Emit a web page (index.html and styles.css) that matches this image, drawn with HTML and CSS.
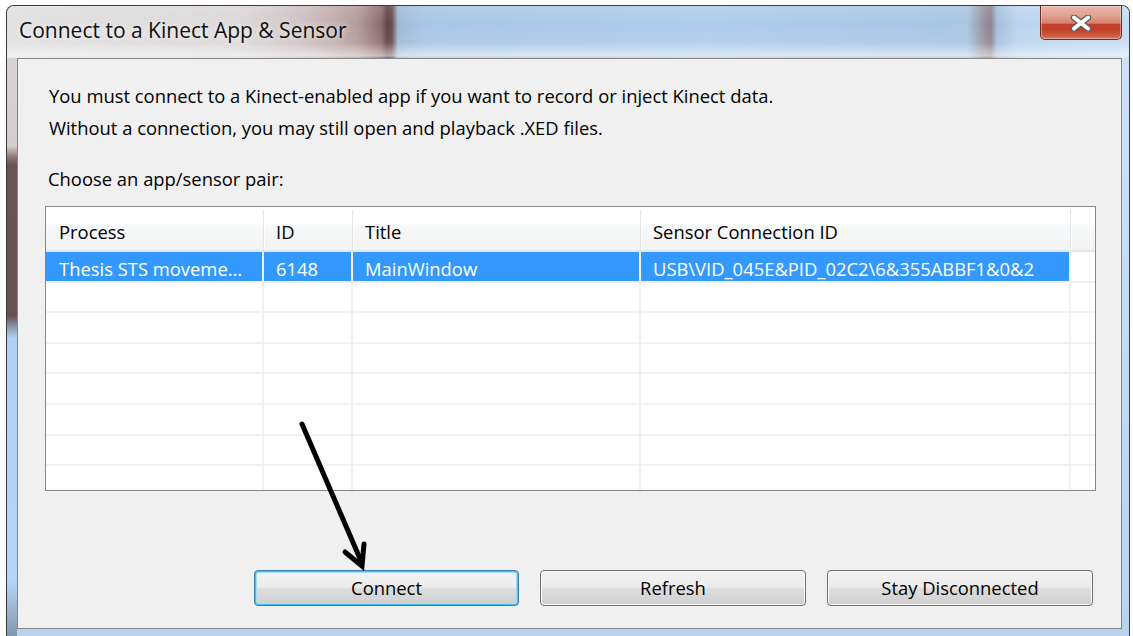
FILE: index.html
```html
<!DOCTYPE html>
<html lang="en">
<head>
<meta charset="utf-8">
<title>Connect to a Kinect App &amp; Sensor</title>
<link rel="stylesheet" href="styles.css">
</head>
<body>
<div class="window">
  <div class="titlebar">
    <span class="title">Connect to a Kinect App &amp; Sensor</span>
    <button class="close" aria-label="Close">
      <svg width="22" height="16" viewBox="0 0 22 16">
        <path d="M4 2.5 L18 13.5 M18 2.5 L4 13.5" stroke="#5a5a5a" stroke-width="6.4" stroke-linecap="round"/>
        <path d="M4 2.5 L18 13.5 M18 2.5 L4 13.5" stroke="#ffffff" stroke-width="4" stroke-linecap="round"/>
      </svg>
    </button>
  </div>
  <div class="client">
    <p class="msg">You must connect to a Kinect-enabled app if you want to record or inject Kinect data.<br>Without a connection, you may still open and playback .XED files.</p>
    <p class="label">Choose an app/sensor pair:</p>
    <div class="listview">
      <div class="row head">
        <div class="cell c1">Process</div>
        <div class="cell c2">ID</div>
        <div class="cell c3">Title</div>
        <div class="cell c4">Sensor Connection ID</div>
        <div class="cell c5"></div>
      </div>
      <div class="row selected">
        <div class="cell c1">Thesis STS moveme...</div>
        <div class="cell c2">6148</div>
        <div class="cell c3">MainWindow</div>
        <div class="cell c4">USB\VID_045E&amp;PID_02C2\6&amp;355ABBF1&amp;0&amp;2</div>
        <div class="cell c5"></div>
      </div>
      <div class="row"><div class="cell c1"></div><div class="cell c2"></div><div class="cell c3"></div><div class="cell c4"></div><div class="cell c5"></div></div>
      <div class="row"><div class="cell c1"></div><div class="cell c2"></div><div class="cell c3"></div><div class="cell c4"></div><div class="cell c5"></div></div>
      <div class="row"><div class="cell c1"></div><div class="cell c2"></div><div class="cell c3"></div><div class="cell c4"></div><div class="cell c5"></div></div>
      <div class="row"><div class="cell c1"></div><div class="cell c2"></div><div class="cell c3"></div><div class="cell c4"></div><div class="cell c5"></div></div>
      <div class="row"><div class="cell c1"></div><div class="cell c2"></div><div class="cell c3"></div><div class="cell c4"></div><div class="cell c5"></div></div>
      <div class="row"><div class="cell c1"></div><div class="cell c2"></div><div class="cell c3"></div><div class="cell c4"></div><div class="cell c5"></div></div>
      <div class="row"><div class="cell c1"></div><div class="cell c2"></div><div class="cell c3"></div><div class="cell c4"></div><div class="cell c5"></div></div>
    </div>
    <div class="actions">
      <button class="btn default">Connect</button>
      <button class="btn">Refresh</button>
      <button class="btn">Stay Disconnected</button>
    </div>
  </div>
</div>
<svg class="pointer" width="1133" height="636" viewBox="0 0 1133 636">
  <path d="M302 424 L361 561" stroke="#000" stroke-width="5" stroke-linecap="round" fill="none"/>
  <path d="M345 552 L362 566 L364 544" stroke="#000" stroke-width="5" stroke-linecap="round" stroke-linejoin="miter" fill="none"/>
</svg>
</body>
</html>
```

FILE: styles.css
```css
html, body {
  margin: 0;
  height: 100%;
}

body {
  background: #ffffff;
  font-family: "Open Sans", "Noto Sans", sans-serif;
  color: #000;
  overflow: hidden;
  position: relative;
}

/* Aero glass window frame */
.window {
  margin: 5px 0 0 6px;
  width: 1124px;
  height: 640px;
  box-sizing: border-box;
  border: 1px solid #3a3a3a;
  border-bottom: 0;
  border-radius: 8px 8px 0 0;
  padding: 0 7px 0 10px;
  overflow: hidden;
  display: flex;
  flex-direction: column;
  background:
    linear-gradient(to bottom,
      #dcd6d7 0, #d4cccd 140px, #8a6e70 152px, #6b5153 160px,
      #6a5052 310px, #8e9fb4 322px, #b1d1f1 332px,
      #b5d5f5 575px, #9bb4cc 605px, #8099b2 630px) 0 0 / 10px 100% no-repeat,
    linear-gradient(to bottom, #cfe3f7, #c3dbf3 50%, #b9d3ee);
}

.titlebar {
  flex: none;
  height: 52px;
  margin: 0 -7px 0 -10px;
  padding: 0 7px 0 12px;
  display: flex;
  justify-content: space-between;
  align-items: flex-start;
  background:
    linear-gradient(to bottom, rgba(255,255,255,0.12), rgba(255,255,255,0) 35%, rgba(255,255,255,0.08) 70%, rgba(255,255,255,0.55) 96%, rgba(255,255,255,0.2)),
    linear-gradient(to right,
      #e2e0e1 0, #dcd8d9 230px, #cdbfc0 300px, #b39c9d 350px, #8e6d6f 374px,
      #5f4345 380px, #6a4d4f 385px, #9fbad6 391px, #a9c7e6 420px,
      #afcdec 700px, #a9c6e4 960px, #958f9a 978px, #8d8591 984px,
      #a6c0dc 990px, #bbd4ee 1010px, #c6ddf3 100%);
}

.title {
  margin-top: 11px;
  font-size: 21px;
  line-height: 26px;
  color: #101010;
  text-shadow: 0 0 6px rgba(255,255,255,0.75), 0 0 12px rgba(255,255,255,0.5);
  white-space: nowrap;
}

.close {
  width: 82px;
  height: 34px;
  margin: 0;
  padding: 0;
  display: flex;
  align-items: center;
  justify-content: center;
  border: 1px solid #6f2b22;
  border-top: 0;
  border-radius: 0 0 5px 5px;
  background: linear-gradient(to bottom,
    #eab7ab 0, #e2a091 30%, #d77f6c 52%, #c4402a 56%, #c2402a 72%, #d25c45 90%, #dc7a62 100%);
  box-shadow: inset 0 0 0 1px rgba(255,255,255,0.35);
}

.close svg {
  display: block;
}

/* Dialog client area */
.client {
  flex: none;
  height: 571px;
  box-sizing: border-box;
  border: 1px solid #878787;
  background: #f0f0f0;
  padding: 21px 25px 22px 27px;
  display: flex;
  flex-direction: column;
  font-size: 18.4px;
}

.msg {
  margin: 0;
  padding-left: 4px;
  line-height: 32px;
}

.label {
  margin: 19px 0 0;
  padding-left: 3px;
  line-height: 32px;
}

/* List view */
.listview {
  margin-top: 11px;
  height: 285px;
  box-sizing: border-box;
  border: 1px solid #828790;
  background: #ffffff;
  overflow: hidden;
}

.row {
  display: flex;
  height: 30.6px;
  box-sizing: border-box;
  border-bottom: 2px solid #f1f1f1;
}

.cell {
  flex: none;
  box-sizing: border-box;
  height: 100%;
  padding: 5px 0 0 12px;
  line-height: 23px;
  white-space: nowrap;
  overflow: hidden;
  border-right: 2px solid #f1f1f1;
}

.c1 { width: 218px; padding-left: 13px; }
.c2 { width: 89px; }
.c3 { width: 288px; }
.c4 { width: 430px; }
.c5 { flex: 1; border-right: 0; }

.row.head {
  height: 45px;
  border-bottom: 2px solid #e4e6ea;
  background: linear-gradient(to bottom, #ffffff 0, #ffffff 17px, #f8f9fa 18px, #f2f3f5 100%);
}

.row.head .cell {
  height: auto;
  margin: 3px 0 0;
  padding-top: 10px;
  border-right: 1px solid #e3e4e7;
  box-shadow: 1px 0 0 #ffffff;
}

.row.head .c5 {
  border-right: 0;
  box-shadow: none;
}

.row.selected .c1,
.row.selected .c2,
.row.selected .c3,
.row.selected .c4 {
  background: #3399ff;
  color: #ffffff;
}

/* Dialog buttons */
.actions {
  margin-top: auto;
  display: flex;
  justify-content: flex-end;
  gap: 21px;
  padding-right: 3px;
}

.btn {
  width: 266px;
  height: 36px;
  box-sizing: border-box;
  margin: 0;
  padding: 0;
  font-family: "Open Sans", "Noto Sans", sans-serif;
  font-size: 18.4px;
  line-height: 34px;
  color: #000;
  border: 1px solid #707070;
  border-radius: 4px;
  background: linear-gradient(to bottom, #f3f3f3 0, #ebebeb 48%, #dddddd 52%, #cfcfcf 100%);
  box-shadow: inset 0 0 0 1px #fbfbfb;
}

.btn.default {
  width: 265px;
  border-color: #3c7fb1;
  box-shadow: inset 0 0 0 1px #3ec0f4, inset 0 0 0 2px #a6def7;
}

/* Annotation arrow drawn over the dialog */
.pointer {
  position: absolute;
  left: 0;
  top: 0;
  pointer-events: none;
}
```
